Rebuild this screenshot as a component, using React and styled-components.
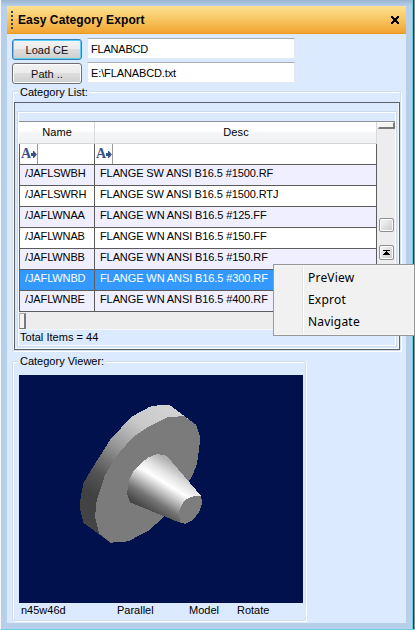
import React from "react";
import styled, { createGlobalStyle, css } from "styled-components";

const Global = createGlobalStyle`
  * { box-sizing: border-box; }
  body { margin: 0; overflow: hidden; font: 11px/13px "Liberation Sans", Arial, sans-serif; color: #000; }
`;

const Window = styled.main`
  position: relative;
  width: 415px;
  height: 630px;
  background: #b8cfe9;
  border-left: 1px solid #f4f8fc;
  border-bottom: 1px solid #6fcdf0;
  display: flex;
`;
const Body = styled.div`
  width: 411px;
  height: 629px;
  padding: 6px;
  background: linear-gradient(#9ab5d1, #b5cde8 6px, #b8cfe9 6px);
`;
const Edge = styled.div`
  width: 3px;
  height: 629px;
  border-left: 1px solid #5fd0ea;
  background: linear-gradient(90deg, #303438 1px, #8a8a88 1px);
`;
const Panel = styled.div`
  width: 399px;
  height: 617px;
  background: #dbeaff;
`;
const Title = styled.header`
  height: 28px;
  padding: 0 7px 0 4px;
  display: flex;
  align-items: center;
  background: linear-gradient(#fce291, #f8c763 45%, #f2a431 96%, #ee981d 97%);
  font-size: 12px;
  font-weight: bold;
`;
const Grip = styled.div`
  width: 2px;
  height: 18px;
  margin-right: 5px;
  background: repeating-linear-gradient(#333f63 0 2px, transparent 2px 4px);
`;
const TitleText = styled.span`
  flex: 1;
  letter-spacing: 0.1px;
`;
const Form = styled.div`
  display: grid;
  grid-template-columns: 70px 208px;
  grid-auto-rows: 21px;
  gap: 3px 5px;
  padding: 4px 0 0 5px;
`;
const Button = styled.button`
  height: 21px;
  margin: 1px 0 0;
  padding: 1px 0 0;
  font: 11px/17px "Liberation Sans", Arial, sans-serif;
  color: #111;
  border: 1px solid ${(p) => (p.$active ? "#3b7fb0" : "#707070")};
  border-radius: 3px;
  box-shadow: inset 0 0 0 1px ${(p) => (p.$active ? "#55d0f5" : "#fcfcfc")};
  background: linear-gradient(#f3f3f3, #ebebeb 49%, #dddddd 50%, #cfcfcf);
`;
const Field = styled.input`
  width: 208px;
  height: 21px;
  padding: 1px 3px 0;
  font: 11px "Liberation Sans", Arial, sans-serif;
  letter-spacing: ${(p) => p.$ls}px;
  border: 1px solid #e2e8f0;
  border-top-color: #abadb3;
  background: #fff;
  outline: none;
`;
const Group = styled.section`
  width: ${(p) => p.$w}px;
  height: ${(p) => p.$h}px;
  margin: ${(p) => p.$top}px 0 0 5px;
  border: 1px solid #d3dde6;
  border-radius: 2px;
  box-shadow: 1px 1px 0 #fff, inset 1px 1px 0 #fff;
`;
const Legend = styled.div`
  width: fit-content;
  height: 13px;
  margin: -7px 0 0 5px;
  padding: ${(p) => p.$drop || 0}px 2px 0;
  background: #dbeaff;
`;
const Outer = styled.div`
  width: 386px;
  height: 248px;
  margin: 4px 0 0 1px;
  padding: 8px 1px 1px 2px;
  border: 1px solid #5c6068;
  box-shadow: inset -1px -1px 0 #f4f8ff;
`;
const Inner = styled.div`
  width: 380px;
  height: 236px;
  padding: 9px 1px 0 1px;
  border: 1px solid #cfdae8;
  box-shadow: inset 1px 1px 0 #fff, inset -1px -1px 0 #fff;
`;
const GridArea = styled.div`
  display: flex;
  width: 376px;
  height: 191px;
  background: #ededed;
  border-top: 1px solid #8e9094;
`;
const Table = styled.div`
  width: 358px;
`;
const line = css`
  border-bottom: 1px solid #5c5c5c;
`;
const Row = styled.div`
  display: grid;
  grid-template-columns: 76px 282px;
  height: 21px;
  background: ${(p) => (p.$selected ? "#3399ff" : p.$alt ? "#f0efff" : "#fff")};
  color: ${(p) => (p.$selected ? "#fff" : "#000")};
`;
const Cell = styled.div`
  ${line}
  padding: 2px 0 0 5px;
  border-right: 1px solid #5c5c5c;
  border-left: ${(p) => (p.$first ? "1px solid #5c5c5c" : "none")};
  white-space: nowrap;
  letter-spacing: ${(p) => p.$ls || 0}px;
`;
const Head = styled(Row)`
  height: 22px;
  background: linear-gradient(#fff 40%, #f4f5f6 55%, #f0f1f3);
  border-bottom: 1px solid #d5d5d5;
`;
const HeadCell = styled.div`
  text-align: center;
  padding: 4px 0 0 1px;
  letter-spacing: 0.1px;
  border-right: 1px solid #d8dade;
`;
const FilterCell = styled.div`
  ${line}
  border-right: 1px solid #5c5c5c;
  border-left: ${(p) => (p.$first ? "1px solid #5c5c5c" : "none")};
  display: flex;
`;
const FilterIcon = styled.span`
  display: flex;
  width: 18px;
  height: 20px;
  border-right: 1px solid #9a9a9a;
  align-items: center;
  padding-left: 1px;
  font: bold 14px "Liberation Serif", serif;
  color: #3b5088;
`;
const VScroll = styled.div`
  width: 18px;
  height: 190px;
  display: flex;
  flex-direction: column;
  align-items: center;
  background: #ededed;
`;
const Split = styled.div`
  width: 17px;
  height: 7px;
  background: #f4f4f4;
  border: 1px solid #fff;
  border-right: 2px solid #77797d;
  border-bottom: 2px solid #77797d;
`;
const ScrollButton = styled.div`
  width: 15px;
  height: ${(p) => p.$h}px;
  margin-top: ${(p) => p.$top}px;
  display: flex;
  align-items: center;
  justify-content: center;
  border: 1px solid #8d8f92;
  border-radius: 2px;
  box-shadow: inset 0 0 0 1px #fafafa;
  background: linear-gradient(135deg, #f8f8f8, #c9cacd);
`;
const HScroll = styled.div`
  width: 376px;
  height: 18px;
  padding-top: 1px;
  background: #ededed;
  border-bottom: 1px solid #f5f9ff;
`;
const HThumb = styled.div`
  width: 7px;
  height: 16px;
  background: #f4f4f4;
  border: 1px solid #aaa;
  border-right: 2px solid #77797d;
  border-bottom-color: #77797d;
`;
const Total = styled.div`
  padding: 1px 0 0 1px;
  letter-spacing: 0.02px;
`;
const Viewport = styled.svg`
  display: block;
  width: 284px;
  height: 228px;
  margin: 7px 0 0 6px;
  background: #00114e;
`;
const Status = styled.div`
  display: grid;
  grid-template-columns: 96px 72px 48px 70px;
  width: 287px;
  height: 15px;
  margin-left: 6px;
  padding: 1px 0 0 2px;
  background: #dbeaff;
`;
const Label = styled.span`
  white-space: nowrap;
`;
const Menu = styled.nav`
  position: absolute;
  left: 272px;
  top: 264px;
  width: 142px;
  height: 72px;
  padding: 2px;
  border: 1px solid #979797;
  background: linear-gradient(90deg, #f1f1f1 28px, #e2e3e3 28px 29px, #fff 29px 30px, #f1f1f1 30px);
  box-shadow: inset 0 0 0 1px #f5f5f5;
`;
const MenuItem = styled.div`
  height: 22px;
  padding-left: 32px;
  font: 12px/22px "Noto Sans", sans-serif;
  letter-spacing: 0.2px;
`;

const rows = [
  ["/JAFLSWBH", "FLANGE SW ANSI B16.5 #1500.RF"],
  ["/JAFLSWRH", "FLANGE SW ANSI B16.5 #1500.RTJ"],
  ["/JAFLWNAA", "FLANGE WN ANSI B16.5 #125.FF"],
  ["/JAFLWNAB", "FLANGE WN ANSI B16.5 #150.FF"],
  ["/JAFLWNBB", "FLANGE WN ANSI B16.5 #150.RF"],
  ["/JAFLWNBD", "FLANGE WN ANSI B16.5 #300.RF"],
  ["/JAFLWNBE", "FLANGE WN ANSI B16.5 #400.RF"],
];

function Filter() {
  return (
    <FilterIcon>
      A
      <svg width="6" height="7" viewBox="0 0 6 7">
        <path d="M0 2h2V0h1l3 3.5L3 7H2V5H0z" fill="#3b5088" />
      </svg>
    </FilterIcon>
  );
}

function Flange() {
  return (
    <Viewport viewBox="0 0 284 228" shapeRendering="crispEdges">
      <defs>
        <linearGradient id="rim" gradientUnits="userSpaceOnUse" x1="285" y1="30" x2="40" y2="385">
          <stop offset="0" stopColor="#d2d2d2" />
          <stop offset="0.2" stopColor="#cacaca" />
          <stop offset="0.42" stopColor="#999" />
          <stop offset="0.65" stopColor="#555" />
          <stop offset="0.8" stopColor="#414141" />
          <stop offset="1" stopColor="#444" />
        </linearGradient>
        <linearGradient id="cone" gradientUnits="userSpaceOnUse" x1="310" y1="205" x2="225" y2="340">
          <stop offset="0" stopColor="#b0b0b0" />
          <stop offset="0.22" stopColor="#e2e2e2" />
          <stop offset="0.4" stopColor="#fff" />
          <stop offset="0.58" stopColor="#c0c0c0" />
          <stop offset="0.78" stopColor="#757575" />
          <stop offset="1" stopColor="#484848" />
        </linearGradient>
      </defs>
      <g transform="translate(51 20) scale(.33333)">
        <path fill="url(#rim)" d="M299 30H272L240 35L185 65L155 97L120 135L95 175L65 222L40 265L31 315V345L40 383L87 418L122 444L342 70L379 90Z" />
        <path fill="#7b7b7b" d="M292 67L342 63L379 90L390 125L388 160L380 210L368 240L355 262L283 365L235 407L175 439L122 443L87 415L75 366L80 318L105 240L142 180L190 125L235 95Z" />
        <path fill="url(#cone)" d="M263 177L285 181L295 188L394 304L345 386L327 382L180 322L171 295L177 256L190 230L210 207L235 187Z" />
        <path fill="#7d7d7d" d="M372 304H393L397 323L388 350L370 374L345 387L330 382L327 348L340 321L355 309Z" />
      </g>
    </Viewport>
  );
}

export default function App() {
  return (
    <>
      <Global />
      <Window>
        <Body>
          <Panel>
            <Title>
              <Grip />
              <TitleText>Easy Category Export</TitleText>
              <svg width="8" height="8" viewBox="0 0 8 8" shapeRendering="crispEdges">
                <path d="M0 0h2v1h1v1h2V1h1V0h2v2H7v1H6v2h1v1h1v2H6V7H5V6H3v1H2v1H0V6h1V5h1V3H1V2H0z" />
              </svg>
            </Title>
            <Form>
              <Button $active>Load CE</Button>
              <Field $ls={-0.2} defaultValue="FLANABCD" />
              <Button>Path ..</Button>
              <Field $ls={-0.12} defaultValue="E:\FLANABCD.txt" />
            </Form>
            <Group $w={389} $h={260} $top={8}>
              <Legend $drop={1}>Category List:</Legend>
              <Outer>
                <Inner>
                  <GridArea>
                    <Table>
                      <Head>
                        <HeadCell>Name</HeadCell>
                        <HeadCell>Desc</HeadCell>
                      </Head>
                      <Row>
                        <FilterCell $first><Filter /></FilterCell>
                        <FilterCell><Filter /></FilterCell>
                      </Row>
                      {rows.map(([name, desc], i) => (
                        <Row key={name} $selected={i === 5} $alt={i % 2 === 0}>
                          <Cell $first $ls={-0.12}>{name}</Cell>
                          <Cell $ls={-0.1}>{desc}</Cell>
                        </Row>
                      ))}
                    </Table>
                    <VScroll>
                      <Split />
                      <ScrollButton $h={14} $top={89} />
                      <ScrollButton $h={15} $top={13}>
                        <svg width="7" height="5" viewBox="0 0 7 5" shapeRendering="crispEdges">
                          <path d="M0 0h7v1H4v1h1v1h1v1h1v1H0V4h1V3h1V2h1V1H0z" />
                        </svg>
                      </ScrollButton>
                    </VScroll>
                  </GridArea>
                  <HScroll><HThumb /></HScroll>
                  <Total>Total Items = 44</Total>
                </Inner>
              </Outer>
            </Group>
            <Group $w={294} $h={260} $top={10}>
              <Legend>Category Viewer:</Legend>
              <Flange />
              <Status>
                <Label>n45w46d</Label>
                <Label>Parallel</Label>
                <Label>Model</Label>
                <Label>Rotate</Label>
              </Status>
            </Group>
          </Panel>
        </Body>
        <Edge />
        <Menu>
          <MenuItem>PreView</MenuItem>
          <MenuItem>Exprot</MenuItem>
          <MenuItem>Navigate</MenuItem>
        </Menu>
      </Window>
    </>
  );
}
